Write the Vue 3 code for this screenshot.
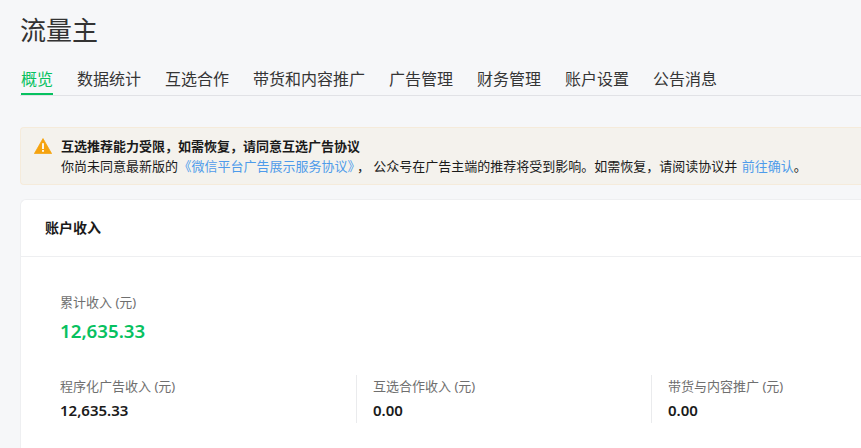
<script setup>
const tabs = ['概览', '数据统计', '互选合作', '带货和内容推广', '广告管理', '财务管理', '账户设置', '公告消息']
const stats = [
  { label: '程序化广告收入 (元)', value: '12,635.33' },
  { label: '互选合作收入 (元)', value: '0.00' },
  { label: '带货与内容推广 (元)', value: '0.00' }
]
</script>

<template>
  <div class="page">
    <h1 class="title">流量主</h1>
    <nav class="tabs">
      <a v-for="(t, i) in tabs" :key="t" class="tab" :class="{ active: i === 0 }">{{ t }}</a>
    </nav>
    <div class="alert">
      <svg class="warn" width="18" height="16" viewBox="0 0 18 16">
        <path d="M9 0.6 L17.6 15.6 H0.4 Z" fill="#f5a30f" stroke="#f5a30f" stroke-width="0.8" stroke-linejoin="round" />
        <rect x="8.1" y="5.2" width="1.8" height="5.8" fill="#fff" />
        <rect x="8.1" y="12" width="1.8" height="1.8" fill="#fff" />
      </svg>
      <div class="alert-text">
        <div class="alert-title">互选推荐能力受限，如需恢复，请同意互选广告协议</div>
        <div class="alert-body">你尚未同意最新版的 <a class="link first">《微信平台广告展示服务协议》</a>， 公众号在广告主端的推荐将受到影响。如需恢复，请阅读协议并 <a class="link last">前往确认</a>。</div>
      </div>
    </div>
    <section class="card">
      <header class="card-head">账户收入</header>
      <div class="card-body">
        <div class="total-label">累计收入 (元)</div>
        <div class="total-value">12,635.33</div>
        <div class="stats">
          <div v-for="s in stats" :key="s.label" class="stat">
            <div class="stat-label">{{ s.label }}</div>
            <div class="stat-value">{{ s.value }}</div>
          </div>
        </div>
      </div>
    </section>
  </div>
</template>

<style>
html, body { margin: 0; background: #f6f7f9; overflow: hidden; }
</style>

<style scoped>
.page {
  width: 841px;
  height: 448px;
  padding-left: 20px;
  overflow: hidden;
  background: #f6f7f9;
  font-family: "Noto Sans", "Noto Sans CJK SC", sans-serif;
  color: #222;
}
.title {
  margin: 0;
  padding-top: 12px;
  font-size: 26px;
  line-height: 36px;
  font-weight: 400;
  color: #333;
}
.tabs {
  display: flex;
  gap: 24px;
  margin-top: 14px;
  padding-left: 1px;
  border-bottom: 1px solid #e1e2e6;
  height: 33px;
}
.tab {
  font-size: 16px;
  line-height: 34px;
  height: 33px;
  box-sizing: border-box;
  color: #353535;
}
.tab.active {
  color: #07c160;
  border-bottom: 2px solid #07c160;
}
.alert {
  display: flex;
  margin-top: 31px;
  height: 56px;
  border: 1px solid #f5ebdb;
  border-right: 0;
  border-radius: 4px 0 0 4px;
  background: #f4f2ed;
  padding-left: 13px;
}
.warn { margin-top: 10px; flex: none; }
.alert-text { margin-left: 9px; padding-top: 8px; font-size: 13px; line-height: 20px; color: #1a1a1a; white-space: nowrap; }
.alert-title { font-weight: 700; }
.link { color: #4e9bea; }
.link.first { margin-left: -3px; margin-right: 3px; }
.link.last { margin-left: 1px; }
.card {
  margin-top: 14px;
  background: #fff;
  border: 1px solid #eeeff1;
  border-right: 0;
  border-bottom: 0;
  border-radius: 6px 0 0 0;
  height: 260px;
}
.card-head {
  height: 56px;
  line-height: 56px;
  padding-left: 24px;
  font-size: 14px;
  font-weight: 700;
  color: #1a1a1a;
  border-bottom: 1px solid #eeeff1;
}
.card-body { padding: 35px 0 0 39px; }
.total-label { font-size: 13px; line-height: 20px; color: #6f6f6f; }
.total-value { margin-top: 5px; font-size: 18.7px; line-height: 28px; font-weight: 600; color: #07c160; }
.stats { display: flex; margin-top: 30px; }
.stat { flex: none; width: 296px; height: 48px; box-sizing: border-box; }
.stat + .stat { border-left: 1px solid #eaebed; padding-left: 16px; }
.stat:last-child { margin-left: -1px; }
.stat-label { font-size: 13px; line-height: 20px; color: #6f6f6f; padding-top: 1px; }
.stat-value { margin-top: 3px; font-size: 15px; line-height: 22px; font-weight: 600; color: #1a1a1a; }
</style>
